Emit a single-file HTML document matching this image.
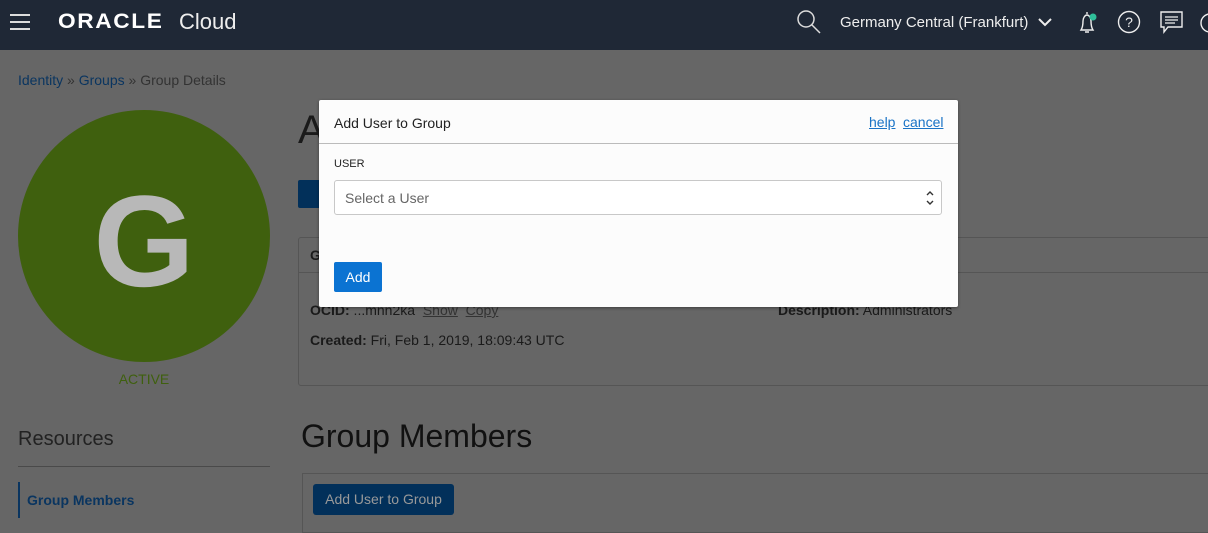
<!DOCTYPE html>
<html><head><meta charset="utf-8"><style>
*{box-sizing:border-box;margin:0;padding:0}
body{width:1208px;height:526px;overflow:hidden;background:#666;font-family:"Liberation Sans",Arial,sans-serif;position:relative}
.a{position:absolute}
</style></head><body>
<div class="a" style="left:0;top:0;width:1208px;height:50px;background:#1f2836"></div>
<div class="a" style="left:10px;top:14px;width:20px;height:2px;background:#ddd"></div>
<div class="a" style="left:10px;top:21px;width:20px;height:2px;background:#ddd"></div>
<div class="a" style="left:10px;top:28px;width:20px;height:2px;background:#ddd"></div>
<div class="a" style="left:58px;top:10px;color:#fff;font-size:21px;font-weight:bold;letter-spacing:1.5px;transform:scaleX(1.08);transform-origin:left">ORACLE</div>
<div class="a" style="left:179px;top:9px;color:#eee;font-size:22px">Cloud</div>
<svg class="a" style="left:796px;top:9px" width="26" height="26" viewBox="0 0 26 26"><circle cx="10" cy="10" r="8" fill="none" stroke="#ddd" stroke-width="1.5"/><path d="M16 16l8 8" stroke="#ddd" stroke-width="1.5"/></svg>
<div class="a" style="left:840px;top:14px;color:#eee;font-size:15px">Germany Central (Frankfurt)</div>
<svg class="a" style="left:1037px;top:16px" width="16" height="12"><path d="M2 3l6 6 6-6" fill="none" stroke="#eee" stroke-width="2"/></svg>
<svg class="a" style="left:1074px;top:9px" width="26" height="28" viewBox="0 0 26 28"><path d="M13 3v2M7 21c2-3 2-6 2-9s2-6 4-6 4 3 4 6 0 6 2 9zM11 23h4" fill="none" stroke="#eee" stroke-width="1.4"/><circle cx="19" cy="8" r="3.5" fill="#2fbf9a"/></svg>
<svg class="a" style="left:1117px;top:10px" width="24" height="24"><circle cx="12" cy="12" r="10.5" fill="none" stroke="#eee" stroke-width="1.4"/><text x="12" y="17" fill="#eee" font-size="14" text-anchor="middle" font-family="Liberation Sans">?</text></svg>
<svg class="a" style="left:1159px;top:10px" width="26" height="26"><path d="M2 2h21v15H9l-4 5v-5H2z" fill="none" stroke="#eee" stroke-width="1.4"/><path d="M6 7h13M6 10h13M6 13h10" stroke="#eee" stroke-width="1.2"/></svg>
<svg class="a" style="left:1200px;top:12px" width="10" height="22"><circle cx="10" cy="11" r="9" fill="none" stroke="#eee" stroke-width="1.4"/></svg>

<div class="a" style="left:18px;top:72px;font-size:14px;color:#333"><span style="color:#0a3560">Identity</span> » <span style="color:#0a3560">Groups</span> » Group Details</div>
<div class="a" style="left:18px;top:110px;width:252px;height:252px;border-radius:50%;background:#3f600e"></div>
<div class="a" style="left:18px;top:176px;width:252px;text-align:center;font-size:130px;font-weight:bold;color:#b8b8b8;line-height:130px">G</div>
<div class="a" style="left:18px;top:371px;width:252px;text-align:center;font-size:14px;color:#3f600e">ACTIVE</div>
<div class="a" style="left:18px;top:428px;font-size:20px;color:#222">Resources</div>
<div class="a" style="left:18px;top:466px;width:252px;height:1px;background:#4a4a4a"></div>
<div class="a" style="left:18px;top:482px;width:2px;height:36px;background:#0a3560"></div>
<div class="a" style="left:27px;top:492px;font-size:14px;font-weight:bold;color:#0a3560">Group Members</div>

<div class="a" style="left:298px;top:108px;font-size:40px;color:#1a1a1a">A</div>
<div class="a" style="left:298px;top:180px;width:40px;height:28px;background:#02305a;border-radius:2px"></div>
<div class="a" style="left:298px;top:237px;width:920px;height:149px;border:1px solid #555;border-radius:3px"></div>
<div class="a" style="left:310px;top:247px;font-size:14px;font-weight:bold;color:#1a1a1a">G</div>
<div class="a" style="left:298px;top:272px;width:920px;height:1px;background:#555"></div>
<div class="a" style="left:310px;top:302px;font-size:14px;color:#1a1a1a"><b>OCID:</b> ...mnn2ka &nbsp;<u style="color:#333">Show</u> &nbsp;<u style="color:#333">Copy</u></div>
<div class="a" style="left:778px;top:302px;font-size:14px;color:#1a1a1a"><b>Description:</b> Administrators</div>
<div class="a" style="left:310px;top:332px;font-size:14px;color:#1a1a1a"><b>Created:</b> Fri, Feb 1, 2019, 18:09:43 UTC</div>
<div class="a" style="left:301px;top:418px;font-size:32px;color:#111">Group Members</div>
<div class="a" style="left:302px;top:473px;width:920px;height:60px;border:1px solid #555"></div>
<div class="a" style="left:313px;top:484px;width:141px;height:31px;background:#02305a;border-radius:3px;color:#999;font-size:14px;line-height:31px;text-align:center">Add User to Group</div>

<div class="a" style="left:319px;top:100px;width:639px;height:207px;background:#fcfcfc;border-radius:2px;box-shadow:0 1px 3px rgba(0,0,0,.4)"></div>
<div class="a" style="left:334px;top:115px;font-size:14px;color:#222">Add User to Group</div>
<div class="a" style="left:869px;top:114px;font-size:14px;color:#1a73c6;text-decoration:underline">help</div>
<div class="a" style="left:903px;top:114px;font-size:14px;color:#1a73c6;text-decoration:underline">cancel</div>
<div class="a" style="left:319px;top:143px;width:639px;height:1px;background:#bbb"></div>
<div class="a" style="left:334px;top:158px;font-size:11px;color:#222">USER</div>
<div class="a" style="left:334px;top:180px;width:608px;height:35px;border:1px solid #c8c8c8;border-radius:3px;background:#fff"></div>
<div class="a" style="left:345px;top:190px;font-size:14px;color:#666">Select a User</div>
<svg class="a" style="left:925px;top:189px" width="10" height="18"><path d="M2 6l3-3 3 3M2 12l3 3 3-3" fill="none" stroke="#333" stroke-width="1.4"/></svg>
<div class="a" style="left:334px;top:262px;width:48px;height:30px;background:#0b73d2;border-radius:2px;color:#fff;font-size:14px;line-height:30px;text-align:center">Add</div>
</body></html>
